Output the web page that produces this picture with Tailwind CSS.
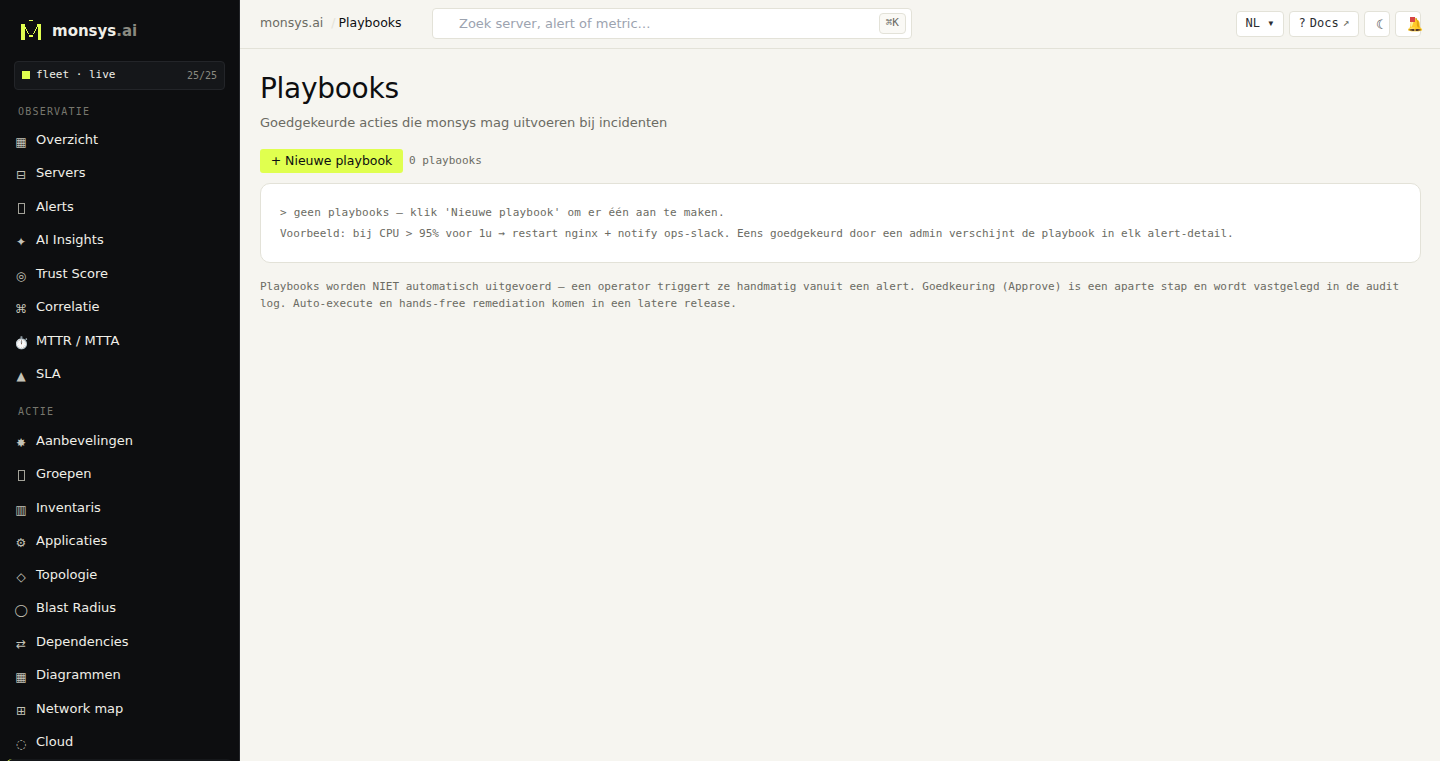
<!DOCTYPE html>
<html lang="nl">
<head>
  <meta charset="UTF-8" />
  <meta name="viewport" content="width=device-width,initial-scale=1.0" />
  <title>Playbooks – monsys.ai</title>
  <script src="https://cdn.jsdelivr.net/npm/@tailwindcss/browser@4"></script>
</head>

<body class="bg-[#f6f5f0] text-[#0d0e10] font-['DejaVu_Sans',sans-serif] text-[13px] leading-normal flex h-screen overflow-hidden">

  <!-- SIDEBAR -->
  <aside class="w-60 shrink-0 h-screen overflow-y-auto [scrollbar-width:none] bg-[#0d0e10] text-[#f0efe8] border-r border-[#232529] px-3.5 pt-4">
    <a href="/" class="flex items-center gap-2 px-1 h-7">
      <svg class="size-[26px]" viewBox="0 0 26 26" fill="#e0ff4f" shape-rendering="crispEdges">
        <path d="M3 7h4v16h-4zM20 7h3v16h-3zM11 3h4v1h-4zM11 18h4v2h-4zM7 10h1v2h-1zM8 12h1v2h-1zM9 14h1v2h-1zM10 16h1v1h-1zM19 7h1v3h-1zM18 10h1v2h-1zM17 12h1v2h-1zM16 14h1v2h-1zM15 16h1v1h-1z" />
      </svg>
      <span class="pt-0.5 text-[15px] font-bold">monsys<span class="text-[#8a8a80]">.ai</span></span>
    </a>

    <div class="mt-[17px] flex items-center justify-between py-[5px] px-[7px] rounded border border-[#232529] bg-[#15171a] font-['DejaVu_Sans_Mono',monospace] text-[11px]">
      <span class="flex items-center gap-1.5"><i class="size-2 bg-[#e0ff4f]"></i>fleet · live</span>
      <span class="text-[10px] text-[#8a8a80]">25/25</span>
    </div>

    <nav>
      <h2 class="h-[33px] pt-3.5 px-1 font-['DejaVu_Sans_Mono',monospace] text-[10px] tracking-[0.12em] text-[#77776e]">OBSERVATIE</h2>
      <ul id="navObservatie"></ul>
      <h2 class="h-[33px] pt-[13px] px-1 font-['DejaVu_Sans_Mono',monospace] text-[10px] tracking-[0.12em] text-[#77776e]">ACTIE</h2>
      <ul id="navActie"></ul>
    </nav>
  </aside>

  <div class="flex-1 min-w-0">
    <!-- TOPBAR -->
    <header class="flex items-center h-[49px] pl-5 pr-[19px] border-b border-[#e3e2d8]">
      <nav class="w-[172px] shrink-0 mb-0.5 flex items-center text-[12.5px]">
        <a href="/" class="text-[#6b6b63]">monsys.ai</a>
        <span class="ml-2 mr-[3px] text-[#e3e2d8]">/</span>
        <span>Playbooks</span>
      </nav>
      <div class="relative w-[480px] mb-0.5">
        <input type="search" aria-label="Zoeken" placeholder="Zoek server, alert of metric…"
               class="block w-full h-[31px] pl-[26px] pr-10 rounded border border-[#e3e2d8] bg-white text-[13px] placeholder:text-[#9ca3af]">
        <kbd class="absolute right-1.5 top-[5px] h-[21px] px-1.5 leading-[18px] rounded border border-[#e3e2d8] bg-[#faf9f5] font-['DejaVu_Sans_Mono',monospace] text-[11px] text-[#6b6b63]">⌘K</kbd>
      </div>
      <div class="ml-auto flex gap-[5px] font-['DejaVu_Sans_Mono',monospace] text-[12px] text-[#2b2d31]">
        <button class="h-[26px] w-12 pb-0.5 rounded border border-[#e3e2d8] bg-white">NL ▾</button>
        <a href="/docs" class="h-[26px] w-[70px] pb-0.5 flex items-center justify-center gap-1 rounded border border-[#e3e2d8] bg-white">? <span>Docs</span> <span class="text-[11px] text-[#6b6b63]">↗</span></a>
        <button aria-label="Thema" class="h-[26px] w-[26px] pt-0.5 pl-[11px] text-left rounded border border-[#e3e2d8] bg-white font-['DejaVu_Sans',sans-serif] text-[13px]">☾</button>
        <button aria-label="Meldingen" class="relative h-[26px] w-[26px] pt-0.5 pl-[11px] text-left rounded border border-[#e3e2d8] bg-white font-['DejaVu_Sans',sans-serif] text-[13px]">🔔<i class="absolute left-3.5 top-[5px] size-[5px] bg-[#d64545]"></i></button>
      </div>
    </header>

    <!-- CONTENT -->
    <main class="px-5 pr-[19px] pt-[19px]">
      <h1 class="text-[28px] leading-[42px] tracking-[-0.01em]">Playbooks</h1>
      <p class="mt-[3px] text-[#6b6b63]">Goedgekeurde acties die monsys mag uitvoeren bij incidenten</p>

      <div class="mt-4 flex items-center gap-1.5">
        <button class="h-6 w-[143px] pt-px rounded-[3px] bg-[#e0ff4f] text-[12.5px]">+ Nieuwe playbook</button>
        <span class="pt-px font-['DejaVu_Sans_Mono',monospace] text-[11px] text-[#6b6b63]">0 playbooks</span>
      </div>

      <section class="mt-2.5 px-[19px] py-[18px] rounded-[10px] border border-[#e3e2d8] bg-white font-['DejaVu_Sans_Mono',monospace] text-[11px] leading-[21px] text-[#6b6b63]">
        <p class="tracking-[0.02em]">&gt; geen playbooks — klik 'Nieuwe playbook' om er één aan te maken.</p>
        <p>Voorbeeld: bij CPU &gt; 95% voor 1u → restart nginx + notify ops-slack. Eens goedgekeurd door een admin verschijnt de playbook in elk alert-detail.</p>
      </section>

      <p class="mt-[15px] font-['DejaVu_Sans_Mono',monospace] text-[11px] leading-[17px] text-[#6b6b63]">Playbooks worden NIET automatisch uitgevoerd — een operator triggert ze handmatig vanuit een alert. Goedkeuring (Approve) is een aparte stap en wordt vastgelegd in de audit log. Auto-execute en hands-free remediation komen in een latere release.</p>
    </main>
  </div>

  <!-- SCRIPT -->
  <script>
    const box = '<i class="mt-0.5 w-[7px] h-[11px] border border-[#a3a299]"></i>';

    const observatie = [
      ["▦", "Overzicht"], ["⊟", "Servers"], [box, "Alerts"], ["✦", "AI Insights"],
      ["◎", "Trust Score"], ["⌘", "Correlatie"], ["⏱️", "MTTR / MTTA"], ["▲", "SLA"]
    ];
    const actie = [
      ["✸", "Aanbevelingen"], [box, "Groepen"], ["▥", "Inventaris"], ["⚙", "Applicaties"],
      ["◇", "Topologie"], ["◯", "Blast Radius"], ["⇄", "Dependencies"], ["▦", "Diagrammen"],
      ["⊞", "Network map"], ["◌", "Cloud"], ["", "Playbooks"]
    ];

    function fillNav(id, items) {
      document.getElementById(id).innerHTML = items.map(([icon, label]) => {
        const active = label === "Playbooks" ? "border-[#e0ff4f] bg-[#15171a]" : "border-transparent";
        return `
        <li><a href="#" class="flex gap-2 -mx-2 pl-1.5 py-[7px] rounded-md border-l-2 ${active}">
          <span class="w-3.5 h-4 pt-1 flex justify-center text-[12px] leading-4 text-[#c4c3b8]">${icon}</span>
          <span>${label}</span>
        </a></li>`;
      }).join("");
    }

    fillNav("navObservatie", observatie);
    fillNav("navActie", actie);
  </script>
</body>
</html>
